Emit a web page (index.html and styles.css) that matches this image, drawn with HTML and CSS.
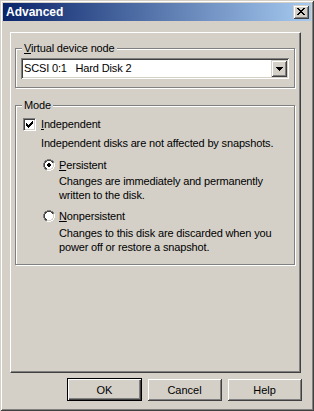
FILE: index.html
```html
<!DOCTYPE html>
<html>
<head>
<meta charset="utf-8">
<title>Advanced</title>
<link rel="stylesheet" href="styles.css">
</head>
<body>
<div class="window">
  <div class="titlebar">
    <span class="title">Advanced</span>
    <span class="close raised">
      <svg width="8" height="7" viewBox="0 0 8 7" shape-rendering="crispEdges"><path fill="#000" d="M0 0h2v1h-2z M6 0h2v1h-2z M1 1h2v1h-2z M5 1h2v1h-2z M2 2h4v1h-4z M3 3h2v1h-2z M2 4h4v1h-4z M1 5h2v1h-2z M5 5h2v1h-2z M0 6h2v1h-2z M6 6h2v1h-2z"/></svg>
    </span>
  </div>
  <div class="panel">
    <div class="group g1">
      <span class="legend"><u>V</u>irtual device node</span>
      <div class="combo">
        <span class="combo-text">SCSI 0:1   Hard Disk 2</span>
        <span class="drop raised">
          <svg width="7" height="4" viewBox="0 0 7 4" shape-rendering="crispEdges"><path fill="#000" d="M0 0h7v1h-7z M1 1h5v1h-5z M2 2h3v1h-3z M3 3h1v1h-1z"/></svg>
        </span>
      </div>
    </div>
    <div class="group g2">
      <span class="legend">Mode</span>
      <div class="row">
        <span class="checkbox">
          <svg width="7" height="7" viewBox="0 0 7 7" shape-rendering="crispEdges"><path fill="#000" d="M0 2h1v3h-1z M1 3h1v3h-1z M2 4h1v3h-1z M3 3h1v3h-1z M4 2h1v3h-1z M5 1h1v3h-1z M6 0h1v3h-1z"/></svg>
        </span>
        <span><u>I</u>ndependent</span>
      </div>
      <div class="desc">Independent disks are not affected by snapshots.</div>
      <div class="row radio-row r1">
        <svg class="radio" width="12" height="12" viewBox="0 0 12 12" shape-rendering="crispEdges">
          <path fill="#808080" d="M4 0h4v1h-4z M2 1h2v1h-2z M8 1h2v1h-2z M1 2h1v2h-1z M10 2h1v2h-1z M0 4h1v4h-1z M1 8h1v2h-1z M2 10h2v1h-2z"/>
          <path fill="#ffffff" d="M11 4h1v4h-1z M10 8h1v2h-1z M8 10h2v1h-2z M4 11h4v1h-4z M4 2h4v1h-4z M3 3h6v1h-6z M2 4h8v4h-8z M3 8h6v1h-6z M4 9h4v1h-4z"/>
          <path fill="#404040" d="M4 1h4v1h-4z M2 2h2v1h-2z M8 2h2v1h-2z M2 3h1v1h-1z M9 3h1v1h-1z M1 4h1v4h-1z M2 8h1v1h-1z M2 9h2v1h-2z"/>
          <path fill="#d4d0c8" d="M10 4h1v4h-1z M9 8h1v1h-1z M8 9h2v1h-2z M4 10h4v1h-4z"/>
          <path fill="#000" d="M5 4h2v1h-2z M4 5h4v2h-4z M5 7h2v1h-2z"/>
        </svg>
        <span><u>P</u>ersistent</span>
      </div>
      <div class="sub s1">Changes are immediately and permanently<br>written to the disk.</div>
      <div class="row radio-row r2">
        <svg class="radio" width="12" height="12" viewBox="0 0 12 12" shape-rendering="crispEdges">
          <path fill="#808080" d="M4 0h4v1h-4z M2 1h2v1h-2z M8 1h2v1h-2z M1 2h1v2h-1z M10 2h1v2h-1z M0 4h1v4h-1z M1 8h1v2h-1z M2 10h2v1h-2z"/>
          <path fill="#ffffff" d="M11 4h1v4h-1z M10 8h1v2h-1z M8 10h2v1h-2z M4 11h4v1h-4z M4 2h4v1h-4z M3 3h6v1h-6z M2 4h8v4h-8z M3 8h6v1h-6z M4 9h4v1h-4z"/>
          <path fill="#404040" d="M4 1h4v1h-4z M2 2h2v1h-2z M8 2h2v1h-2z M2 3h1v1h-1z M9 3h1v1h-1z M1 4h1v4h-1z M2 8h1v1h-1z M2 9h2v1h-2z"/>
          <path fill="#d4d0c8" d="M10 4h1v4h-1z M9 8h1v1h-1z M8 9h2v1h-2z M4 10h4v1h-4z"/>
        </svg>
        <span><u>N</u>onpersistent</span>
      </div>
      <div class="sub s2">Changes to this disk are discarded when you<br>power off or restore a snapshot.</div>
    </div>
  </div>
  <div class="buttons">
    <button class="btn default">OK</button>
    <button class="btn raised">Cancel</button>
    <button class="btn raised">Help</button>
  </div>
</div>
</body>
</html>
```

FILE: styles.css
```css
* { box-sizing: border-box; }

body {
  margin: 0;
  background: #d4d0c8;
  font: 11px/14px "Liberation Sans", Arial, sans-serif;
  letter-spacing: -0.15px;
  color: #000;
}

u { text-decoration: underline; text-underline-offset: 1px; }

.raised {
  background: #d4d0c8;
  box-shadow: inset 1px 1px 0 #d4d0c8, inset -1px -1px 0 #404040, inset 2px 2px 0 #ffffff, inset -2px -2px 0 #808080;
}

.window {
  width: 314px;
  height: 411px;
  padding: 3px;
  background: #d4d0c8;
  box-shadow: inset 1px 1px 0 #d4d0c8, inset -1px -1px 0 #404040, inset 2px 2px 0 #ffffff, inset -2px -2px 0 #808080;
  display: flex;
  flex-direction: column;
}

.titlebar {
  height: 18px;
  flex: none;
  background: linear-gradient(to right, #0a246a, #a6caf0);
  display: flex;
  align-items: center;
  justify-content: space-between;
  padding: 0 2px 0 3px;
}

.title {
  color: #fff;
  font-weight: bold;
  font-size: 12px;
  letter-spacing: 0;
  line-height: 18px;
}

.close {
  width: 16px;
  height: 14px;
  padding: 3px 0 0 4px;
  display: block;
}
.close svg { display: block; }

.panel {
  flex: none;
  margin: 11px 0 0 7px;
  width: 291px;
  height: 341px;
  border: 1px solid;
  border-color: #ffffff #404040 #404040 #ffffff;
  box-shadow: inset -1px -1px 0 #808080;
  padding: 15px 0 0 4px;
}

.group {
  position: relative;
  width: 280px;
  border: 1px solid #808080;
  box-shadow: 1px 1px 0 #ffffff, inset 1px 1px 0 #ffffff;
}

.legend {
  position: absolute;
  left: 6px;
  top: -7px;
  padding: 0 2px;
  line-height: 13px;
  background: #d4d0c8;
}

.g1 {
  height: 40px;
  padding: 9px 0 0 5px;
}

.combo {
  width: 268px;
  height: 21px;
  background: #fff;
  box-shadow: inset 1px 1px 0 #808080, inset -1px -1px 0 #ffffff, inset 2px 2px 0 #404040, inset -2px -2px 0 #d4d0c8;
  padding: 2px;
  display: flex;
}

.combo-text {
  white-space: pre;
  padding-left: 1px;
  line-height: 17px;
}

.drop {
  margin-left: auto;
  width: 16px;
  height: 17px;
  display: flex;
  align-items: center;
  justify-content: center;
  padding-top: 1px;
}
.drop svg { display: block; }

.g2 {
  margin-top: 17px;
  padding: 11px 0 10px 7px;
}

.row {
  display: flex;
  align-items: center;
  height: 14px;
}

.checkbox {
  width: 13px;
  height: 13px;
  margin-right: 5px;
  background: #fff;
  border: 1px solid;
  border-color: #808080 #ffffff #ffffff #808080;
  box-shadow: inset 1px 1px 0 #404040, inset -1px -1px 0 #d4d0c8;
  padding: 2px 0 0 2px;
}
.checkbox svg { display: block; }

.desc {
  margin-top: 5px;
  padding-left: 18px;
}

.radio-row { padding-left: 20px; }
.r1 { margin-top: 8px; }
.r2 { margin-top: 7px; }

.radio {
  display: block;
  margin-right: 4px;
  flex: none;
}

.sub { padding-left: 36px; }
.s1 { margin-top: 2px; }
.s2 { margin-top: 3px; }

.buttons {
  display: flex;
  gap: 5px;
  margin: 5px 0 0 64px;
}

.btn {
  width: 75px;
  height: 23px;
  padding: 0;
  border: 0;
  font: inherit;
  color: #000;
  background: #d4d0c8;
}

.btn.default {
  border: 1px solid #000;
  box-shadow: inset 1px 1px 0 #ffffff, inset -1px -1px 0 #404040, inset -2px -2px 0 #808080;
}
```
